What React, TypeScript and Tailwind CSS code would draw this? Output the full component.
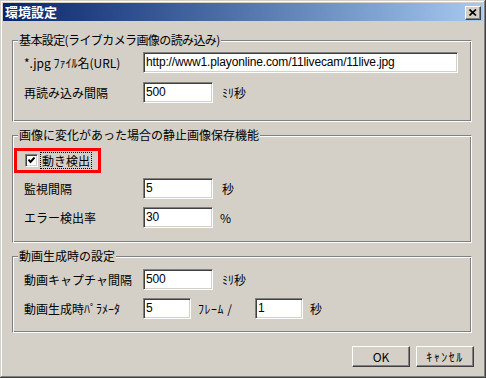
import React from 'react';

const font = { fontFamily: '"MS UI Gothic", "Noto Sans CJK JP", sans-serif' };

// sunken edit box, Win2000 style
const Edit = ({ value, w }: { value: string; w: string }) => (
  <div
    className={`${w} h-[21px] bg-white border border-t-[#808080] border-l-[#808080] border-b-white border-r-white shadow-[inset_1px_1px_0_#404040,inset_-1px_-1px_0_#d4d0c8] pl-[2px] pt-[2px] text-[12px] leading-[15px] tracking-[-0.15px] text-black font-['Liberation_Sans',sans-serif] whitespace-nowrap overflow-hidden`}
  >
    {value}
  </div>
);

const Group = ({ label, className, labelClass = '', children }: { label: string; className: string; labelClass?: string; children: React.ReactNode }) => (
  <div
    className={`relative w-[460px] box-border border border-t-[#808080] border-l-[#808080] border-b-white border-r-white shadow-[inset_1px_1px_0_#fff,inset_-1px_-1px_0_#808080] ${className}`}
  >
    <span className={`absolute left-[5px] top-[-8px] px-[1px] bg-[#d4d0c8] text-[12px] leading-[14px] whitespace-nowrap ${labelClass}`}>{label}</span>
    {children}
  </div>
);

const Row = ({ label, children, className = '' }: { label: string; children: React.ReactNode; className?: string }) => (
  <div className={`flex items-center h-[21px] pl-[11px] ${className}`}>
    <span className="w-[119px] text-[12px] whitespace-nowrap">{label}</span>
    {children}
  </div>
);

const Button = ({ children }: { children: React.ReactNode }) => (
  <div className="w-[58px] h-[21px] flex items-center justify-center bg-[#d4d0c8] border border-t-white border-l-white border-b-[#404040] border-r-[#404040] shadow-[inset_-1px_-1px_0_#808080] text-[12px] text-black whitespace-nowrap">
    {children}
  </div>
);

export default function App() {
  return (
    <div
      className="w-[486px] h-[378px] bg-[#d4d0c8] p-[3px] box-border text-black shadow-[inset_-1px_-1px_0_#404040,inset_1px_1px_0_#d4d0c8,inset_-2px_-2px_0_#808080,inset_2px_2px_0_#fff]"
      style={font}
    >
      {/* title bar */}
      <div className="h-[18px] flex items-center justify-between bg-linear-to-r from-[#0a246a] to-[#a6caf0] pl-[2px] pr-[2px]">
        <span className="text-white font-bold text-[13px] leading-[16px]">環境設定</span>
        <div className="w-[16px] h-[14px] mt-[1px] bg-[#d4d0c8] border border-t-white border-l-white border-b-[#404040] border-r-[#404040] shadow-[inset_-1px_-1px_0_#808080] flex items-center justify-center">
          <svg width="8" height="7" viewBox="0 0 8 7">
            <path d="M0.5 0.5 L7 6.5 M7 0.5 L0.5 6.5" stroke="#000" strokeWidth="1.7" />
          </svg>
        </div>
      </div>

      <div className="pl-[9px] pr-[9px] pt-[19px]">
        <Group label="基本設定(ライブカメラ画像の読み込み)" labelClass="tracking-[-0.6px]" className="h-[82px] pt-[11px]">
          <Row label="*.jpg ﾌｧｲﾙ名(URL)">
            <Edit value="http://www1.playonline.com/11livecam/11live.jpg" w="w-[315px]" />
          </Row>
          <Row label="再読み込み間隔" className="mt-[9px]">
            <Edit value="500" w="w-[70px]" />
            <span className="ml-[9px] text-[12px]">ﾐﾘ秒</span>
          </Row>
        </Group>

        <Group label="画像に変化があった場合の静止画像保存機能" className="h-[108px] mt-[13px] pt-[12px]">
          <div className="ml-[1px] w-[87px] h-[25px] border-[3px] border-[#ff0000] flex items-center pl-[8px]">
            <div className="w-[13px] h-[13px] bg-white border border-t-[#808080] border-l-[#808080] border-b-white border-r-white shadow-[inset_1px_1px_0_#404040,inset_-1px_-1px_0_#d4d0c8] flex items-center justify-center">
              <svg width="7" height="7" viewBox="0 0 7 7">
                <path d="M0.5 2.5 L2.5 5 L6.5 0.5" stroke="#000" strokeWidth="2" fill="none" />
              </svg>
            </div>
            <span className="ml-[3px] px-[1px] text-[12px] leading-[15px] outline outline-1 outline-dotted outline-black">動き検出</span>
          </div>
          <Row label="監視間隔" className="mt-[5px]">
            <Edit value="5" w="w-[70px]" />
            <span className="ml-[9px] text-[12px]">秒</span>
          </Row>
          <Row label="エラー検出率" className="mt-[8px]">
            <Edit value="30" w="w-[70px]" />
            <span className="ml-[7px] text-[12px]">%</span>
          </Row>
        </Group>

        <Group label="動画生成時の設定" className="h-[77px] mt-[13px] pt-[12px]">
          <Row label="動画キャプチャ間隔">
            <Edit value="500" w="w-[70px]" />
            <span className="ml-[9px] text-[12px]">ﾐﾘ秒</span>
          </Row>
          <Row label="動画生成時ﾊﾟﾗﾒｰﾀ" className="mt-[8px]">
            <Edit value="5" w="w-[48px]" />
            <span className="ml-[7px] w-[57px] text-[12px] tracking-[0.5px] whitespace-nowrap">ﾌﾚｰﾑ /</span>
            <Edit value="1" w="w-[48px]" />
            <span className="ml-[7px] text-[12px]">秒</span>
          </Row>
        </Group>

        <div className="flex justify-end gap-[6px] mt-[13px]">
          <Button>OK</Button>
          <Button><span className="tracking-[1.5px]">ｷｬﾝｾﾙ</span></Button>
        </div>
      </div>
    </div>
  );
}
